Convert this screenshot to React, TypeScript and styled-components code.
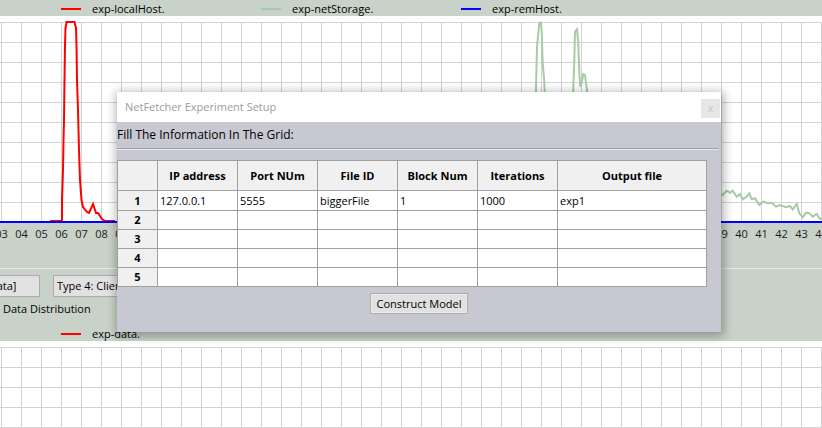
import React from "react";
import styled, { createGlobalStyle } from "styled-components";

const GlobalStyle = createGlobalStyle`
  html, body {
    margin: 0;
    padding: 0;
  }
  body {
    background: #c8d2c8;
    font-family: "Open Sans", "Noto Sans", sans-serif;
    font-size: 12px;
    color: #000;
  }
`;

const BAND = "#c8d2c8";
const GRID = "#d3d3d3";
const LINE = "#a0a0a0";

// ---------- background window ----------

const Screen = styled.div`
  position: relative;
  width: 822px;
  height: 428px;
  overflow: hidden;
  background: ${BAND};
  display: flex;
  flex-direction: column;
`;

const LegendBar = styled.div<{ $h: number; $pt?: number }>`
  height: ${(p) => p.$h}px;
  padding-top: ${(p) => p.$pt ?? 0}px;
  box-sizing: border-box;
  display: flex;
  align-items: center;
  padding-left: 61px;
  flex-shrink: 0;
`;

const LegendItem = styled.div`
  width: 200px;
  display: flex;
  align-items: center;
  gap: 11px;
`;

const Swatch = styled.span<{ $color: string }>`
  width: 20px;
  height: 2px;
  background: ${(p) => p.$color};
`;

const LegendText = styled.span`
  font-size: 11px;
  line-height: 14px;
  white-space: nowrap;
`;

const Plot = styled.svg`
  display: block;
  flex-shrink: 0;
`;

const AxisBand = styled.svg`
  display: block;
  flex-shrink: 0;
  font-family: "Open Sans", "Noto Sans", sans-serif;
  font-size: 11px;
`;

const Divider = styled.div`
  height: 1px;
  background: #e4e9e4;
  flex-shrink: 0;
`;

const Controls = styled.div`
  height: 57px;
  box-sizing: border-box;
  padding-top: 6px;
  display: flex;
  flex-direction: column;
  flex-shrink: 0;
`;

const ToolRow = styled.div`
  display: flex;
  gap: 13px;
  margin-left: -60px;
`;

const ToolButton = styled.div<{ $w: number; $align?: string }>`
  width: ${(p) => p.$w}px;
  height: 22px;
  box-sizing: border-box;
  border: 1px solid #adadad;
  background: #e1e1e1;
  font-size: 11px;
  line-height: 20px;
  padding: 0 3px;
  text-align: ${(p) => p.$align ?? "center"};
  white-space: nowrap;
  overflow: hidden;
`;

const Caption = styled.div`
  margin-top: 4px;
  padding-left: 3px;
  font-size: 11px;
  line-height: 16px;
`;

// ---------- dialog ----------

const Dialog = styled.div`
  position: absolute;
  left: 117px;
  top: 92px;
  width: 604px;
  height: 240px;
  background: #c8c8d2;
  box-shadow: 1px 2px 9px 2px rgba(0, 0, 0, 0.3);
  display: flex;
  flex-direction: column;
`;

const TitleBar = styled.div`
  height: 30px;
  background: #fff;
  display: flex;
  justify-content: space-between;
  padding-left: 8px;
  padding-right: 1px;
  flex-shrink: 0;
`;

const TitleText = styled.span`
  color: #9c9c9c;
  font-size: 11px;
  line-height: 30px;
`;

const CloseBox = styled.div`
  width: 19px;
  height: 19px;
  margin-top: 7px;
  background: #e6e6e6;
  color: #c4c4c4;
  font-size: 10px;
  line-height: 18px;
  text-align: center;
`;

const Prompt = styled.div`
  height: 26px;
  line-height: 26px;
  font-size: 12px;
`;

const Groove = styled.div`
  width: 601px;
  border-top: 1px solid #9c9ca4;
  border-bottom: 1px solid #ececf0;
`;

const Grid = styled.div`
  margin-top: 10px;
  width: 590px;
  box-sizing: border-box;
  display: grid;
  grid-template-columns: 39px repeat(5, 79px) 148px;
  grid-template-rows: 29px 19px repeat(4, 18px);
  gap: 1px;
  background: ${LINE};
  border: 1px solid ${LINE};
`;

const HeadCell = styled.div`
  background: #f0f0f0;
  font-weight: 700;
  font-size: 11px;
  line-height: 14px;
  display: flex;
  align-items: center;
  justify-content: center;
  overflow: hidden;
`;

const Cell = styled.div`
  background: #fff;
  font-size: 11px;
  line-height: 19px;
  padding-left: 2px;
  white-space: nowrap;
  overflow: hidden;
`;

const Footer = styled.div`
  margin-top: 6px;
  display: flex;
  justify-content: center;
`;

const ActionButton = styled.div`
  width: 98px;
  height: 21px;
  box-sizing: border-box;
  border: 1px solid #adadad;
  box-shadow: inset 0 0 0 1px #ececec;
  background: #e1e1e1;
  font-size: 11px;
  line-height: 19px;
  text-align: center;
`;

// ---------- chart drawing ----------

const cols = Array.from({ length: 42 }, (_, k) => 1.5 + 20 * k);

function GridLines({ bottom }: { bottom: number }) {
  const rows: number[] = [];
  for (let y = 6.5; y < bottom; y += 20) rows.push(y);
  return (
    <g stroke={GRID} strokeWidth={1}>
      {cols.map((x) => (
        <line key={"v" + x} x1={x} x2={x} y1={6} y2={bottom} />
      ))}
      {rows.map((y) => (
        <line key={"h" + y} x1={0} x2={822} y1={y} y2={y} />
      ))}
    </g>
  );
}

// points in page coords; shifted into the plot (which starts at y=16)
const toPath = (pts: number[][]) =>
  pts.map((p, i) => (i ? "L" : "M") + p[0] + "," + (p[1] - 16)).join(" ");

const red = [
  [50, 221], [62, 221], [62, 200], [63, 170], [63.5, 140], [64, 120], [64.5, 80],
  [65, 45], [65.5, 28], [66.5, 22], [74.5, 22], [76, 28], [76.5, 45], [77, 80],
  [78, 110], [79, 150], [80, 180], [81.5, 200], [83, 207], [87, 212], [89, 213],
  [93, 204], [96, 213], [98, 213], [102, 219], [105, 221], [115, 221],
];

const green = [
  [525, 221], [534, 200], [535.5, 120], [536, 87], [537, 47], [538.3, 33],
  [539.3, 23], [541, 22.5], [541.7, 33], [542.7, 63], [544.3, 82], [545, 100],
  [546, 180], [548, 215], [570, 215], [572, 150], [573.3, 88], [574.3, 60],
  [575, 31.7], [577, 29.3], [578.3, 43], [579.3, 73], [580.3, 86.7], [581.7, 83],
  [583.3, 74], [585, 75], [586, 83], [587, 90], [590, 150], [600, 175],
  [700, 188], [722.7, 195], [726.7, 190.7], [730, 192.7], [732.7, 190.7],
  [736.7, 196.7], [740, 194], [742.7, 199.3], [746.7, 196.7], [749.3, 193.3],
  [751.7, 199.3], [755, 198.3], [759.3, 205], [763.3, 201.7], [768.3, 203.3],
  [771.7, 202.7], [776, 206.7], [780, 205], [786, 207.3], [790, 206],
  [792.7, 209.3], [796.7, 204], [799.3, 213.3], [802.7, 217.3], [806, 212.7],
  [809.3, 213.3], [812.7, 216.7], [816.7, 214], [819.3, 218.3], [823, 219.3],
];

const headers = ["IP address", "Port NUm", "File ID", "Block Num", "Iterations", "Output file"];
const rowsData = [
  ["127.0.0.1", "5555", "biggerFile", "1", "1000", "exp1"],
  ["", "", "", "", "", ""],
  ["", "", "", "", "", ""],
  ["", "", "", "", "", ""],
  ["", "", "", "", "", ""],
];

export default function App() {
  return (
    <>
      <GlobalStyle />
      <Screen>
        <LegendBar $h={16} $pt={2}>
          <LegendItem>
            <Swatch $color="#ff0000" />
            <LegendText>exp-localHost.</LegendText>
          </LegendItem>
          <LegendItem>
            <Swatch $color="#a6cba6" />
            <LegendText>exp-netStorage.</LegendText>
          </LegendItem>
          <LegendItem>
            <Swatch $color="#0000ff" />
            <LegendText>exp-remHost.</LegendText>
          </LegendItem>
        </LegendBar>

        <Plot width={822} height={207}>
          <rect x={0} y={0} width={822} height={205} fill="#fff" />
          <GridLines bottom={205} />
          <path d={toPath(green)} fill="none" stroke="#a6cba6" strokeWidth={2} />
          <path d={toPath(red)} fill="none" stroke="#ff0000" strokeWidth={2} />
          <rect x={0} y={205} width={822} height={2} fill="#0000ff" />
        </Plot>

        <AxisBand width={822} height={45}>
          {cols.map((x, i) => (
            <text key={x} x={x} y={15} textAnchor="middle" fill="#1a1a1a">
              {String(i + 3).padStart(2, "0")}
            </text>
          ))}
        </AxisBand>
        <Divider />

        <Controls>
          <ToolRow>
            <ToolButton $w={100}>[Exp Data]</ToolButton>
            <ToolButton $w={170} $align="left">Type 4: Client Server</ToolButton>
          </ToolRow>
          <Caption>Data Distribution</Caption>
        </Controls>

        <LegendBar $h={15}>
          <LegendItem>
            <Swatch $color="#ff0000" />
            <LegendText>exp-data.</LegendText>
          </LegendItem>
        </LegendBar>

        <Plot width={822} height={87}>
          <rect x={0} y={0} width={822} height={87} fill="#fff" />
          <GridLines bottom={87} />
        </Plot>

        <Dialog>
          <TitleBar>
            <TitleText>NetFetcher Experiment Setup</TitleText>
            <CloseBox>x</CloseBox>
          </TitleBar>
          <Prompt>Fill The Information In The Grid:</Prompt>
          <Groove />
          <Grid>
            <HeadCell />
            {headers.map((h) => (
              <HeadCell key={h}>{h}</HeadCell>
            ))}
            {rowsData.map((r, i) => (
              <React.Fragment key={i}>
                <HeadCell>{i + 1}</HeadCell>
                {r.map((v, j) => (
                  <Cell key={j}>{v}</Cell>
                ))}
              </React.Fragment>
            ))}
          </Grid>
          <Footer>
            <ActionButton>Construct Model</ActionButton>
          </Footer>
        </Dialog>
      </Screen>
    </>
  );
}
